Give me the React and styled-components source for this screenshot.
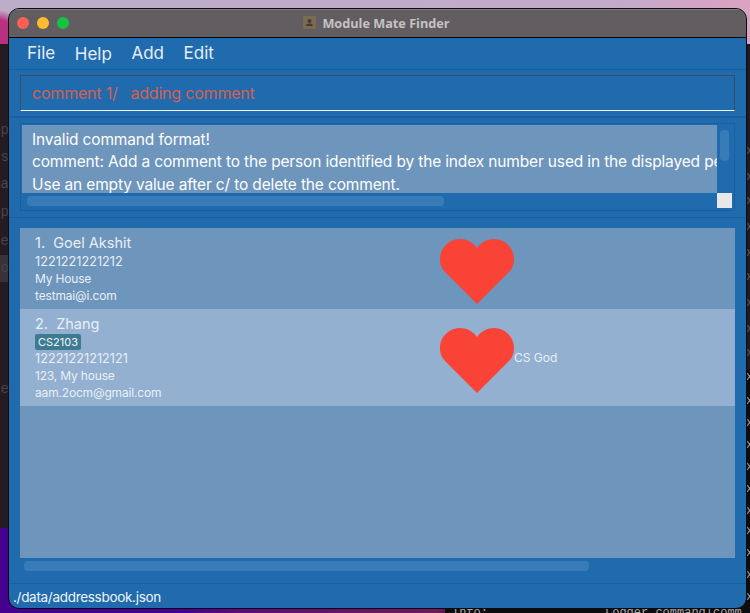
import React from "react";
import styled, { createGlobalStyle } from "styled-components";

const Global = createGlobalStyle`
  html, body { margin: 0; padding: 0; background: #1c161b; }
  * { box-sizing: border-box; }
`;

const Desktop = styled.div`
  position: relative;
  width: 750px;
  height: 613px;
  overflow: hidden;
  padding: 8px 0 0 8px;
  font-family: Inter, "Liberation Sans", sans-serif;
  background:
    radial-gradient(ellipse 24px 34px at 0 44px, #b8307f 0 70%, transparent 100%),
    linear-gradient(100deg, #bcaec9 0%, #c3abca 72%, #d9a3c3 85%, #dda6c2 100%);
`;

const BottomWall = styled.div`
  position: absolute;
  left: 0;
  right: 0;
  bottom: 0;
  height: 90px;
  background: linear-gradient(90deg, #45008f 0 24%, #5c0a78 32%, #6e1a5c 58%, #5a1a4c 60%);
`;

const LeftTerminal = styled.div`
  position: absolute;
  left: 0;
  top: 44px;
  width: 9px;
  height: 484px;
  background: #241c22;
  overflow: hidden;
`;

const TerminalWord = styled.span`
  position: absolute;
  right: 0;
  top: ${(p) => p.$top}px;
  font: 14px "Liberation Mono", monospace;
  color: #4a4347;
  white-space: nowrap;
`;

const Highlight = styled.div`
  position: absolute;
  left: 0;
  right: 0;
  top: 211px;
  height: 27px;
  background: #39323a;
`;

const RightTerminal = styled.div`
  position: absolute;
  right: 0;
  top: 44px;
  width: 305px;
  bottom: 0;
  background: linear-gradient(180deg, #1f1a1f 0 326px, #0d0d10 326px);
  overflow: hidden;
`;

const RightGlyph = styled.span`
  position: absolute;
  left: 301px;
  top: ${(p) => p.$top}px;
  font: 12px "Liberation Mono", monospace;
  color: ${(p) => (p.$top < 320 ? "#5e595d" : "#a09da0")};
`;

const BottomLog = styled.div`
  position: absolute;
  top: 606px;
  left: ${(p) => p.$left}px;
  font: 12px "Liberation Mono", monospace;
  color: #a8a5a8;
  white-space: nowrap;
`;

const Window = styled.div`
  position: relative;
  width: 739px;
  height: 601px;
  border: 1px solid #0b0b0e;
  border-radius: 11px;
  overflow: hidden;
  display: flex;
  flex-direction: column;
  background: #1f6bad;
`;

const TitleBar = styled.header`
  flex: none;
  position: relative;
  height: 29px;
  display: flex;
  align-items: center;
  justify-content: center;
  gap: 6px;
  padding: 0 2px 2px 0;
  background: #625d60;
  border-top: 1px solid #85817f;
  border-bottom: 1px solid #08080c;
`;

const Lights = styled.div`
  position: absolute;
  left: 8px;
  top: 7px;
  display: flex;
  gap: 8px;
`;

const Light = styled.span`
  width: 12px;
  height: 12px;
  border-radius: 50%;
  background: ${(p) => p.$c};
`;

const Title = styled.span`
  font: 700 12.7px "Open Sans", sans-serif;
  color: #c6c2c4;
`;

const MenuBar = styled.nav`
  flex: none;
  height: 32px;
  display: flex;
  align-items: center;
  gap: 19.6px;
  padding: 0 0 2px 18px;
  border-bottom: 1px solid #1a5f9e;
`;

const MenuItem = styled.span`
  font-size: 17px;
  color: #e6eef7;
  margin-top: ${(p) => (p.$low ? 2 : 0)}px;
`;

const CommandSection = styled.section`
  flex: none;
  height: 48px;
  padding: 5px 11px 0;
  border-bottom: 2px solid #195f9f;
`;

const CommandBox = styled.div`
  height: 36px;
  display: flex;
  align-items: center;
  padding: 0 0 0 11px;
  border: 1px solid #3d4d5f;
  border-bottom: 1px solid #f4f7fa;
  font-size: 16px;
  letter-spacing: -0.2px;
  color: #d6604f;
  white-space: pre;
`;

const ResultSection = styled.section`
  flex: none;
  height: 100px;
  padding: 5px 11px 0;
  border-bottom: 1px solid #195f9f;
`;

const ResultBox = styled.div`
  height: 88px;
  display: grid;
  grid-template-columns: 695px 15px;
  grid-template-rows: 68px 15px;
  padding: 1px;
  border: 1px solid #1a5f9e;
`;

const ResultText = styled.div`
  background: #6e95bc;
  overflow: hidden;
  padding: 4px 0 0 10px;
  font-size: 15.5px;
  letter-spacing: -0.15px;
  line-height: 22.4px;
  color: #fdfeff;
  white-space: nowrap;
`;

const VTrack = styled.div`
  padding: 5px 3px 0 3px;
`;

const HTrack = styled.div`
  padding: 3px 0 0 5px;
`;

const Thumb = styled.div`
  width: ${(p) => p.$w || "100%"};
  height: ${(p) => p.$h || "10px"};
  border-radius: 4px;
  background: #377cb9;
`;

const Corner = styled.div`
  background: #e8e8e8;
`;

const ListSection = styled.section`
  flex: none;
  height: 366px;
  display: flex;
  flex-direction: column;
  padding: 10px 11px 0;
  border-bottom: 1px solid #195f9f;
`;

const List = styled.div`
  flex: none;
  height: 330px;
  background: #6e95bc;
`;

const Card = styled.article`
  height: ${(p) => p.$h}px;
  display: flex;
  align-items: center;
  padding-left: 15px;
  background: ${(p) => (p.$alt ? "#93b0d0" : "#6e95bc")};
  color: #e8eff6;
`;

const Info = styled.div`
  width: 405px;
  flex: none;
  display: flex;
  flex-direction: column;
  align-items: flex-start;
  padding-top: 2px;
  font-size: 12px;
  letter-spacing: -0.17px;
  line-height: 17.4px;
`;

const Name = styled.div`
  font-size: 14.5px;
  letter-spacing: 0;
  line-height: 18px;
  white-space: pre;
`;

const Phone = styled.span`
  font-size: 12.7px;
  letter-spacing: 0;
  margin: 1px 0 -1px;
`;

const Tag = styled.span`
  background: #3e7b92;
  color: #f2f6f9;
  font-size: 11px;
  letter-spacing: 0;
  line-height: 16px;
  height: 16px;
  padding: 0 3px;
  border-radius: 2px;
  margin: 1px 0 -1px;
`;

const Heart = styled.svg`
  flex: none;
  width: 74px;
  height: 65px;
  margin-top: 5px;
  display: block;
`;

const Comment = styled.span`
  font-size: 12px;
  letter-spacing: 0;
`;

const ListScroll = styled.div`
  padding: 3px 0 0 4px;
`;

const Status = styled.footer`
  flex: 1;
  display: flex;
  align-items: center;
  padding: 1px 0 0 4px;
  font-size: 13.5px;
  letter-spacing: -0.3px;
  color: #f0f5fa;
`;

const HeartIcon = () => (
  <Heart viewBox="0 0 74 65">
    <path
      fill="#f94336"
      d="M37 9C33 3 26 0 20 0 9 0 0 9 0 20c0 6 2 10 6 14l31 31 31-31c4-4 6-8 6-14C74 9 65 0 54 0 48 0 41 3 37 9Z"
    />
  </Heart>
);

const leftWords = [
  ["op", 78],
  ["ts", 105],
  ["ma", 132],
  ["op", 160],
  ["ne", 189],
  ["to", 216],
  ["re", 337],
];

const rightGlyphs = [100, 126, 150, 176, 202, 226, 252, 278, 302, 326, 350, 372, 394, 416, 438, 460, 480, 502, 524, 546];

export default function App() {
  return (
    <>
      <Global />
      <Desktop>
        <BottomWall />
        <LeftTerminal>
          <Highlight />
          {leftWords.map(([w, t]) => (
            <TerminalWord key={t} $top={t}>{w}</TerminalWord>
          ))}
        </LeftTerminal>
        <RightTerminal>
          {rightGlyphs.map((t) => (
            <RightGlyph key={t} $top={t}>x</RightGlyph>
          ))}
        </RightTerminal>
        <BottomLog $left={452}>Info:</BottomLog>
        <BottomLog $left={605}>Logger.command|comm</BottomLog>
        <Window>
          <TitleBar>
            <Lights>
              <Light $c="#ff5f57" />
              <Light $c="#febb2e" />
              <Light $c="#12c43f" />
            </Lights>
            <svg width="13" height="13" viewBox="0 0 13 13">
              <rect width="13" height="13" rx="1" fill="#7c6a50" />
              <circle cx="6.5" cy="5" r="2" fill="#453c31" />
              <path d="M3 10c0-2 2-2.500 3.500-2.500S10 8 10 10Z" fill="#453c31" />
            </svg>
            <Title>Module Mate Finder</Title>
          </TitleBar>
          <MenuBar>
            <MenuItem>File</MenuItem>
            <MenuItem $low>Help</MenuItem>
            <MenuItem>Add</MenuItem>
            <MenuItem>Edit</MenuItem>
          </MenuBar>
          <CommandSection>
            <CommandBox>comment 1/   adding comment</CommandBox>
          </CommandSection>
          <ResultSection>
            <ResultBox>
              <ResultText>
                Invalid command format!
                <br />
                comment: Add a comment to the person identified by the index number used in the displayed person list.
                <br />
                Use an empty value after c/ to delete the comment.
              </ResultText>
              <VTrack>
                <Thumb $h="31px" />
              </VTrack>
              <HTrack>
                <Thumb $w="417px" />
              </HTrack>
              <Corner />
            </ResultBox>
          </ResultSection>
          <ListSection>
            <List>
              <Card $h={81}>
                <Info>
                  <Name>1.  Goel Akshit</Name>
                  <Phone>1221221221212</Phone>
                  <span>My House</span>
                  <span>testmai@i.com</span>
                </Info>
                <HeartIcon />
              </Card>
              <Card $h={97} $alt>
                <Info>
                  <Name>2.  Zhang</Name>
                  <Tag>CS2103</Tag>
                  <Phone>12221221212121</Phone>
                  <span>123, My house</span>
                  <span>aam.2ocm@gmail.com</span>
                </Info>
                <HeartIcon />
                <Comment>CS God</Comment>
              </Card>
            </List>
            <ListScroll>
              <Thumb $w="565px" />
            </ListScroll>
          </ListSection>
          <Status>./data/addressbook.json</Status>
        </Window>
      </Desktop>
    </>
  );
}
